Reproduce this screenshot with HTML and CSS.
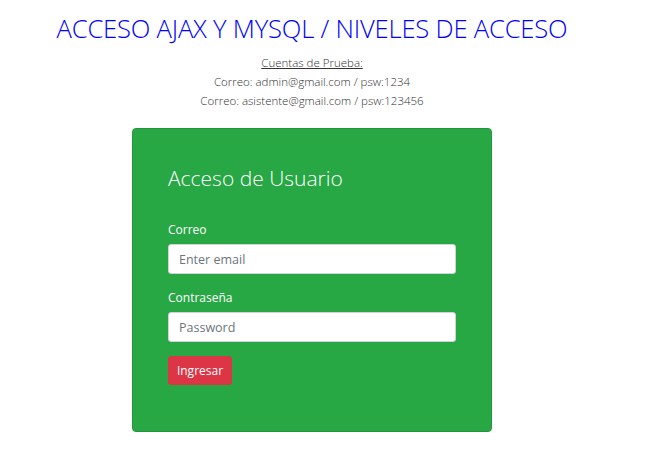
FILE: index.html
```html
<!DOCTYPE html>
<html lang="es">
<head>
<meta charset="utf-8">
<title>Acceso</title>
<link rel="stylesheet" href="styles.css">
</head>
<body>
<main class="page">
  <h1 class="title">ACCESO AJAX Y MYSQL / NIVELES DE ACCESO</h1>
  <div class="accounts">
    <div class="accounts-head">Cuentas de Prueba:</div>
    <div>Correo: admin@gmail.com / psw:1234</div>
    <div>Correo: asistente@gmail.com / psw:123456</div>
  </div>
  <section class="card">
    <h2 class="card-title">Acceso de Usuario</h2>
    <form class="form">
      <div class="group">
        <label class="label" for="email">Correo</label>
        <input class="input" id="email" type="email" placeholder="Enter email">
      </div>
      <div class="group">
        <label class="label" for="pass">Contraseña</label>
        <input class="input" id="pass" type="password" placeholder="Password">
      </div>
      <div class="actions"><button class="btn" type="button">Ingresar</button></div>
    </form>
  </section>
</main>
</body>
</html>
```
FILE: styles.css
```css
* { box-sizing: border-box; }
html, body { margin: 0; padding: 0; background: #fff; }
body { font-family: "Open Sans", "Noto Sans", sans-serif; color: #212529; }
.page {
  width: 624px;
  display: flex;
  flex-direction: column;
  align-items: center;
}
.title {
  margin: 12px 0 0;
  font-family: "Open Sans", sans-serif;
  font-weight: 300;
  font-size: 25.6px;
  line-height: 34px;
  color: #0000ff;
  letter-spacing: -0.2px;
}
.accounts {
  margin-top: 7px;
  text-align: center;
  font-size: 11.5px;
  line-height: 19px;
  font-weight: 300;
  color: #333;
}
.accounts-head { text-decoration: underline; }
.card {
  margin-top: 18px;
  width: 360px;
  height: 304px;
  background: #28a745;
  border: 1px solid #23963d;
  border-radius: 4px;
  padding: 34px 35px 0;
}
.card-title {
  margin: 0;
  font-weight: 300;
  font-size: 21px;
  line-height: 30px;
  color: #fff;
}
.form {
  margin-top: 28px;
  display: flex;
  flex-direction: column;
  gap: 15px;
}
.actions { margin-top: -1px; }
.group { display: flex; flex-direction: column; gap: 6px; }
.label { font-size: 12px; line-height: 17px; color: #fff; }
.input {
  width: 288px;
  height: 30px;
  border: 1px solid #ced4da;
  border-radius: 3px;
  padding: 0 10px;
  font-family: inherit;
  font-size: 12.5px;
  color: #495057;
  background: #fff;
}
.input::placeholder { color: #6c757d; opacity: 1; }
.btn {
  height: 29px;
  width: 64px;
  padding: 0;
  border: 1px solid #dc3545;
  background: #dc3545;
  color: #fff;
  border-radius: 3px;
  font-family: inherit;
  font-size: 12px;
}
```
